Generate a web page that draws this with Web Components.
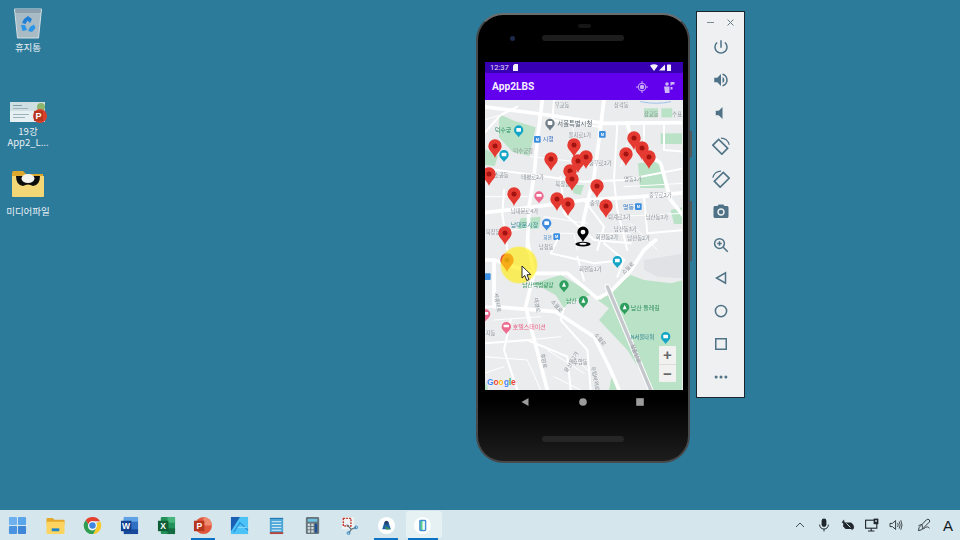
<!DOCTYPE html>
<html lang="ko">
<head>
<meta charset="utf-8">
<title>App2LBS</title>
<style>
  html, body { margin: 0; height: 100%; overflow: hidden; }
  body { font-family: "Noto Sans CJK KR", "Noto Sans", sans-serif; }
</style>
</head>
<body>
<desk-top>
  <desktop-icon style="left:0;top:6px" label="휴지통">
    <svg width="32" height="34" viewBox="0 0 32 34">
      <path d="M2.500 3 L29.500 3 L26.500 32 L5.500 32 Z" fill="#a9bcc6" stroke="#d5dee3" stroke-width="1"/>
      <path d="M3 3 L29 3 L28.400 7 L3.600 7 Z" fill="#8ba2ae"/>
      <path d="M12 13 L16 10 L20 13 L18 17 L15.500 14.500 L13.500 18 L10 17 Z" fill="#1f7fd6"/>
      <path d="M9 19 L13 19 L15 24 L10.500 25 Z M16 25 L18 21 L22 18.500 L23.500 22 L20 26 Z" fill="#2b95e8"/>
    </svg>
  </desktop-icon>
  <desktop-icon style="left:0;top:100px" label="19강&#10;App2_L...">
    <svg width="38" height="24" viewBox="0 0 38 24">
      <rect x="1" y="2" width="35" height="20" fill="#e6eff1"/>
      <rect x="1" y="2" width="35" height="9" fill="#cfdfe2"/>
      <rect x="4" y="5" width="9" height="1" fill="#7f9fa8"/>
      <rect x="4" y="8" width="15" height="1" fill="#9ab3ba"/>
      <rect x="4" y="14" width="16" height="1" fill="#9ab3ba"/>
      <rect x="4" y="17" width="12" height="1" fill="#9ab3ba"/>
      <circle cx="32" cy="7" r="4" fill="#8fb66e"/>
      <circle cx="31" cy="16" r="7" fill="#d9412b"/>
      <rect x="25" y="11" width="9" height="10" fill="#b7361f"/>
      <text x="26.500" y="19" font-family="Liberation Sans" font-size="9" font-weight="700" fill="#fff">P</text>
    </svg>
  </desktop-icon>
  <desktop-icon style="left:0;top:170px;--label-gap:8px" label="미디어파일">
    <svg width="34" height="28" viewBox="0 0 34 28">
      <path d="M1 3 Q1 1 3 1 L12 1 L15 4 L32 4 L32 9 L1 9 Z" fill="#dca92e"/>
      <path d="M1 6 L33 6 L33 26 Q33 27 32 27 L2 27 Q1 27 1 26 Z" fill="#f3d675"/>
      <path d="M5 6 L29 6 Q29 15 22 16 Q17 13 12 16 Q5 15 5 6 Z" fill="#0d0d0d"/>
      <ellipse cx="17" cy="8.500" rx="6.500" ry="4.500" fill="#f5f3ee"/>
    </svg>
  </desktop-icon>

  <phone-frame style="left:476px;top:13px">
    <status-bar></status-bar>
    <app-bar title="App2LBS"></app-bar>
    <map-view></map-view>
  </phone-frame>

  <emu-toolbar style="left:696px;top:11px">
    <tool-button><svg viewBox="0 0 24 24"><path d="M13 3h-2v10h2V3zm4.830 2.170l-1.420 1.420C17.990 7.860 19 9.810 19 12c0 3.870-3.130 7-7 7s-7-3.130-7-7c0-2.190 1.010-4.140 2.580-5.420L6.170 5.170C4.230 6.820 3 9.260 3 12c0 4.970 4.030 9 9 9s9-4.030 9-9c0-2.740-1.230-5.180-3.170-6.830z"/></svg></tool-button>
    <tool-button><svg viewBox="0 0 24 24"><path d="M3 9v6h4l5 5V4L7 9H3zm13.500 3c0-1.770-1.020-3.290-2.500-4.030v8.050c1.480-.73 2.500-2.250 2.500-4.020zM14 3.230v2.060c2.890.86 5 3.540 5 6.710s-2.110 5.850-5 6.710v2.060c4.010-.91 7-4.490 7-8.770s-2.990-7.860-7-8.770z"/></svg></tool-button>
    <tool-button><svg viewBox="0 0 24 24"><path d="M5 9v6h4l5 5V4L9 9H5z"/></svg></tool-button>
    <tool-button><svg viewBox="0 0 24 24"><g transform="rotate(45 11 13)"><rect x="2.500" y="7.500" width="17" height="11" fill="none" stroke="#4f7286" stroke-width="2.200"/></g><path d="M12 1.500 Q20.500 1.500 23 10.500" fill="none" stroke="#4f7286" stroke-width="1.400"/></svg></tool-button>
    <tool-button><svg viewBox="0 0 24 24"><g transform="rotate(-45 13 13)"><rect x="4.500" y="7.500" width="17" height="11" fill="none" stroke="#4f7286" stroke-width="2.200"/></g><path d="M12 1.500 Q3.500 1.500 1 10.500" fill="none" stroke="#4f7286" stroke-width="1.400"/></svg></tool-button>
    <tool-button><svg viewBox="0 0 24 24"><path fill-rule="evenodd" d="M9 2L7.170 4H4c-1.100 0-2 .9-2 2v12c0 1.100.9 2 2 2h16c1.100 0 2-.9 2-2V6c0-1.100-.9-2-2-2h-3.170L15 2H9zm3 15c-2.760 0-5-2.240-5-5s2.240-5 5-5 5 2.240 5 5-2.240 5-5 5z"/><circle cx="12" cy="12" r="3"/></svg></tool-button>
    <tool-button><svg viewBox="0 0 24 24"><circle cx="10" cy="10" r="6.500" fill="none" stroke="#4f7286" stroke-width="2"/><path d="M15 15l6 6M10 7v6M7 10h6" fill="none" stroke="#4f7286" stroke-width="2"/></svg></tool-button>
    <tool-button><svg viewBox="0 0 24 24"><path d="M18 5V19L6 12Z" fill="none" stroke="#4f7286" stroke-width="2"/></svg></tool-button>
    <tool-button><svg viewBox="0 0 24 24"><circle cx="12" cy="12" r="7.500" fill="none" stroke="#4f7286" stroke-width="2"/></svg></tool-button>
    <tool-button><svg viewBox="0 0 24 24"><rect x="5" y="5" width="14" height="14" fill="none" stroke="#4f7286" stroke-width="2"/></svg></tool-button>
    <tool-button><svg viewBox="0 0 24 24"><circle cx="5.500" cy="12" r="2"/><circle cx="12" cy="12" r="2"/><circle cx="18.500" cy="12" r="2"/></svg></tool-button>
  </emu-toolbar>

  <task-bar slot="bar">
    <task-icon slot="apps"><svg viewBox="0 0 20 20"><g fill="#4b93e0"><rect x="1" y="1" width="8.500" height="8.500" rx="1" fill="#6fb1ee"/><rect x="10.500" y="1" width="8.500" height="8.500" rx="1" fill="#5ba5ea"/><rect x="1" y="10.500" width="8.500" height="8.500" rx="1"/><rect x="10.500" y="10.500" width="8.500" height="8.500" rx="1" fill="#3f86d8"/></g></svg></task-icon>
    <task-icon slot="apps"><svg viewBox="0 0 20 20"><path d="M0.500 3 Q0.500 2 1.500 2 L7 2 L9 4 L19.500 4 L19.500 9 L0.500 9 Z" fill="#e3a92a"/><path d="M0.500 6 L19.500 6 L19.500 18 Q19.500 19 18.500 19 L1.500 19 Q0.500 19 0.500 18 Z" fill="#fbd55f"/><rect x="6" y="13" width="8" height="3" fill="#1f86c9"/></svg></task-icon>
    <task-icon slot="apps"><svg viewBox="0 0 20 20"><path d="M10 1 A9 9 0 0 1 18 5.500 L10 5.500 A4.500 4.500 0 0 0 5.700 8.600 L2.800 4.500 A9 9 0 0 1 10 1Z" fill="#e5412f"/><path d="M18 5.500 A9 9 0 0 1 10.800 19 L13.700 12.800 A4.500 4.500 0 0 0 14 7.500 Z" fill="#f8c92a"/><path d="M2.800 4.500 A9 9 0 0 0 10.800 19 L13.700 12.800 A4.500 4.500 0 0 1 5.700 8.600Z" fill="#2f9e50"/><circle cx="10" cy="10" r="4.400" fill="#fff"/><circle cx="10" cy="10" r="3.400" fill="#3f86e0"/></svg></task-icon>
    <task-icon slot="apps"><svg viewBox="0 0 20 20"><rect x="4" y="1" width="15" height="18" rx="1" fill="#2f6fc4"/><rect x="4" y="1" width="15" height="5" fill="#5fa3e6"/><rect x="4" y="14" width="15" height="5" fill="#174a9c"/><rect x="1" y="5" width="11" height="11" fill="#123f8e"/><text x="2.200" y="13.800" font-family="Liberation Sans" font-weight="700" font-size="9" fill="#fff">W</text></svg></task-icon>
    <task-icon slot="apps"><svg viewBox="0 0 20 20"><rect x="4" y="1" width="15" height="18" rx="1" fill="#22925a"/><rect x="11" y="1" width="8" height="6" fill="#47b67d"/><rect x="11" y="13" width="8" height="6" fill="#146b40"/><rect x="1" y="5" width="11" height="11" fill="#0f5f36"/><text x="3.500" y="13.800" font-family="Liberation Sans" font-weight="700" font-size="9" fill="#fff">X</text></svg></task-icon>
    <task-icon slot="apps" running><svg viewBox="0 0 20 20"><circle cx="11" cy="10" r="9" fill="#e0593e"/><path d="M11 1 A9 9 0 0 1 20 10 L11 10Z" fill="#ef8a6e"/><rect x="1" y="5" width="11" height="11" fill="#b7361f"/><text x="3.700" y="13.800" font-family="Liberation Sans" font-weight="700" font-size="9" fill="#fff">P</text></svg></task-icon>
    <task-icon slot="apps"><svg viewBox="0 0 20 20"><rect x="1" y="1" width="18" height="18" fill="#4cc3f7"/><path d="M1 1H10.500L1 16Z" fill="#1a5fb4"/><path d="M4 17 L10.500 7 L19 15" fill="none" stroke="#2a8fd8" stroke-width="1.300"/><path d="M8 12 H18" stroke="#8fdcfb" stroke-width="1"/></svg></task-icon>
    <task-icon slot="apps"><svg viewBox="0 0 20 20"><rect x="3" y="2" width="14" height="16" fill="#4ca6d8"/><path d="M3 2h14v1H3z" fill="#1f6fa8"/><path d="M5 6h10M5 9h10M5 12h10M5 15h10" stroke="#e4f2f9" stroke-width="1"/><rect x="3" y="17" width="14" height="2" fill="#b5473a"/></svg></task-icon>
    <task-icon slot="apps"><svg viewBox="0 0 20 20"><rect x="3" y="1" width="14" height="18" rx="1.500" fill="#67757c"/><rect x="5" y="3" width="10" height="3" fill="#6cc3e4"/><g fill="#d2d9dc"><rect x="5" y="8" width="2.500" height="2.500"/><rect x="8.700" y="8" width="2.500" height="2.500"/><rect x="5" y="11.500" width="2.500" height="2.500"/><rect x="8.700" y="11.500" width="2.500" height="2.500"/><rect x="5" y="15" width="2.500" height="2.500"/><rect x="8.700" y="15" width="2.500" height="2.500"/></g><rect x="12.400" y="8" width="2.600" height="9.500" fill="#1d4f92"/></svg></task-icon>
    <task-icon slot="apps"><svg viewBox="0 0 20 20"><rect x="2" y="1" width="13" height="13" rx="1" fill="#eef2f3"/><rect x="3.500" y="2.500" width="8" height="8" fill="none" stroke="#c33c34" stroke-width="1.500" stroke-dasharray="2 1"/><path d="M7 9 L12 14 L9 18 M12 14 L17 12" fill="none" stroke="#5b6f78" stroke-width="1.200"/><circle cx="9" cy="18" r="1.500" fill="none" stroke="#2f87c8"/><circle cx="17" cy="12" r="1.500" fill="none" stroke="#2f87c8"/></svg></task-icon>
    <task-icon slot="apps" running><svg viewBox="0 0 20 20"><circle cx="10" cy="10" r="9" fill="#fff"/><path d="M5.500 14 L8 6 L12 6 L14.500 14 Z" fill="#1d5fa8"/><path d="M8 10 L14.500 14 L10 14.500 Z" fill="#3a8f5a"/><circle cx="10" cy="7" r="2" fill="#2a3f66"/></svg></task-icon>
    <task-icon slot="apps" running active><svg viewBox="0 0 20 20"><circle cx="10" cy="10" r="9" fill="#fff"/><rect x="6.500" y="4" width="7.500" height="12" rx="1.500" fill="#3f8fd8"/><rect x="8" y="5.500" width="4.500" height="9" fill="#5fd08a"/><rect x="10" y="5.500" width="2.500" height="9" fill="#f0fafc"/></svg></task-icon>

    <tray-icon slot="tray"><svg viewBox="0 0 20 20"><path d="M5 12.500 L10 7.500 L15 12.500" fill="none" stroke="#3b4a52" stroke-width="1.200"/></svg></tray-icon>
    <tray-icon slot="tray"><svg viewBox="0 0 20 20"><rect x="7" y="2" width="6" height="10.500" rx="3" fill="#20282d"/><path d="M4.500 9.500 Q5 15 10 15 Q15 15 15.500 9.500 M10 15 V18" fill="none" stroke="#20282d" stroke-width="1.200"/></svg></tray-icon>
    <tray-icon slot="tray"><svg viewBox="0 0 20 20"><path d="M2 7 L5 3 L6 8 Z M15 17 L18 12 L13 12 Z" fill="#20282d"/><path d="M4 7 H14 L17 10 V15 H7 L4 12 Z" fill="#20282d"/><path d="M8 8 L13 13" stroke="#d5e6ec" stroke-width="1.200"/></svg></tray-icon>
    <tray-icon slot="tray"><svg viewBox="0 0 20 20"><rect x="2" y="4" width="14" height="10" fill="none" stroke="#20282d" stroke-width="1.400"/><path d="M9 14v3M5 17.500h8" stroke="#20282d" stroke-width="1.400"/><rect x="12" y="2" width="6" height="7" fill="#20282d"/><rect x="14" y="4" width="2" height="2" fill="#d5e6ec"/></svg></tray-icon>
    <tray-icon slot="tray"><svg viewBox="0 0 20 20"><path d="M2.500 8 H5.500 L9.500 4.500 V15.500 L5.500 12 H2.500 Z" fill="none" stroke="#20282d" stroke-width="1.100"/><path d="M12 7.500 Q13.500 10 12 12.500 M14 5.500 Q16.500 10 14 14.500 M16 4 Q19 10 16 16" fill="none" stroke="#20282d" stroke-width="1"/></svg></tray-icon>
    <tray-icon slot="tray" style="margin-left:4px"><svg viewBox="0 0 20 20"><path d="M3 17 L4 13 L13 3.500 Q15 2 16.500 3.500 Q18 5 16.500 6.500 L7 16 Z" fill="none" stroke="#20282d" stroke-width="1.100"/><path d="M3 11 Q9 7 8 13 Q7 17 12 13 Q15 11 17 14" fill="none" stroke="#20282d" stroke-width="1"/></svg></tray-icon>
    <tray-icon slot="tray"><span>A</span></tray-icon>
  </task-bar>
</desk-top>

<script>
/* === ESCRITORIO === */

class DeskTop extends HTMLElement {
  constructor() {
    super();
    this.attachShadow({ mode: "open" });
    this.shadowRoot.innerHTML = `
      <style>
        :host {
          display: flex;
          flex-direction: column;
          width: 960px;
          height: 540px;
          background: #2d7b9b;
        }
        .canvas {
          position: relative;
          flex: 1;
        }
      </style>
      <div class="canvas"><slot></slot></div>
      <slot name="bar"></slot>
    `;
  }
}
customElements.define("desk-top", DeskTop);

class DesktopIcon extends HTMLElement {
  constructor() {
    super();
    this.attachShadow({ mode: "open" });
    const label = this.getAttribute("label") || "";
    this.shadowRoot.innerHTML = `
      <style>
        :host {
          position: absolute;
          display: flex;
          flex-direction: column;
          align-items: center;
          width: 56px;
          color: #e8f0f3;
          font: 9.5px/11px "Noto Sans CJK KR", "Noto Sans", sans-serif;
          text-align: center;
        }
        .label { white-space: pre-line; margin-top: var(--label-gap, 2px); }
        ::slotted(svg) { display: block; }
      </style>
      <slot></slot>
      <div class="label">${label}</div>
    `;
  }
}
customElements.define("desktop-icon", DesktopIcon);

/* === TELEFONO === */

class PhoneFrame extends HTMLElement {
  constructor() {
    super();
    this.attachShadow({ mode: "open" });
    this.shadowRoot.innerHTML = `
      <style>
        :host {
          position: absolute;
          display: block;
          box-sizing: border-box;
          width: 214px;
          height: 450px;
          background: linear-gradient(#000 86%, #1d1d1d);
          border: 2px solid #47494b;
          border-top-color: #6a6c6e;
          border-radius: 27px;
        }
        .top {
          position: relative;
          height: 47px;
        }
        .sensor {
          position: absolute;
          left: 100px; top: 9px;
          width: 13px; height: 4px;
          border-radius: 2px;
          background: #161616;
        }
        .camera {
          position: absolute;
          left: 32px; top: 21px;
          width: 5px; height: 5px;
          border-radius: 50%;
          background: #1d2a4a;
        }
        .speaker {
          position: absolute;
          left: 64px; top: 20px;
          width: 82px; height: 6px;
          border-radius: 3px;
          background: #1d1d1d;
        }
        .key {
          position: absolute;
          right: -4px;
          width: 2px;
          background: #55585a;
        }
        .power { top: 116px; height: 26px; }
        .volume { top: 186px; height: 60px; }
        .screen {
          display: flex;
          flex-direction: column;
          margin: 0 5.5px 0 7px;
          height: 328px;
        }
        .nav {
          display: flex;
          justify-content: space-between;
          align-items: center;
          height: 24px;
          padding: 0 43px 0 42px;
        }
        .nav svg { width: 10px; height: 10px; fill: #9c9c9c; }
        .bottom-speaker {
          width: 82px;
          height: 6px;
          margin: 22px auto 0;
          border-radius: 3px;
          background: #262626;
        }
      </style>
      <div class="key power"></div>
      <div class="key volume"></div>
      <div class="top">
        <div class="sensor"></div>
        <div class="camera"></div>
        <div class="speaker"></div>
      </div>
      <div class="screen"><slot></slot></div>
      <div class="nav">
        <svg viewBox="0 0 10 10"><path d="M8.500 1V9L1.500 5Z"/></svg>
        <svg viewBox="0 0 10 10"><circle cx="5" cy="5" r="3.800"/></svg>
        <svg viewBox="0 0 10 10"><rect x="1.200" y="1.200" width="7.600" height="7.600"/></svg>
      </div>
      <div class="bottom-speaker"></div>
    `;
  }
}
customElements.define("phone-frame", PhoneFrame);

class StatusBar extends HTMLElement {
  constructor() {
    super();
    this.attachShadow({ mode: "open" });
    this.shadowRoot.innerHTML = `
      <style>
        :host {
          display: flex;
          align-items: center;
          flex: none;
          height: 11px;
          padding: 0 12px 0 5px;
          background: #3700b3;
          color: #e9e3f7;
          font: 7.5px Roboto, sans-serif;
        }
        svg { display: block; fill: #f2eefb; }
        .sd { margin-left: 4px; }
        .right { display: flex; align-items: center; gap: 1.5px; margin-left: auto; }
      </style>
      <span>12:37</span>
      <svg class="sd" width="5" height="7" viewBox="0 0 5 7"><path d="M1.500 0H5V7H0V1.500Z"/></svg>
      <div class="right">
        <svg width="8" height="7" viewBox="0 0 8 7"><path d="M0 1.500Q4 -1 8 1.500L4 7Z"/></svg>
        <svg width="6" height="7" viewBox="0 0 6 7"><path d="M6 0.500V6.500H0Z"/></svg>
        <svg width="4" height="7" viewBox="0 0 4 7"><rect y="0.500" width="4" height="6.500" rx=".5"/></svg>
      </div>
    `;
  }
}
customElements.define("status-bar", StatusBar);

class AppBar extends HTMLElement {
  constructor() {
    super();
    this.attachShadow({ mode: "open" });
    const title = this.getAttribute("title") || "";
    this.shadowRoot.innerHTML = `
      <style>
        :host {
          display: flex;
          align-items: center;
          flex: none;
          height: 27px;
          padding: 0 8px 0 7px;
          background: #6200ee;
          color: #f4eefe;
          font: 700 10.2px Roboto, sans-serif;
        }
        .actions { display: flex; align-items: center; gap: 15px; margin-left: auto; }
        svg { display: block; }
      </style>
      <span>${title}</span>
      <div class="actions">
        <svg width="12" height="12" viewBox="0 0 12 12">
          <circle cx="6" cy="6" r="3.800" fill="none" stroke="#c9aef6" stroke-width="1"/>
          <circle cx="6" cy="6" r="2.200" fill="#c9aef6"/>
          <path d="M6 0v2M6 10v2M0 6h2M10 6h2" stroke="#c9aef6" stroke-width="1"/>
        </svg>
        <svg width="12" height="12" viewBox="0 0 12 12" fill="#cdb6f5">
          <circle cx="4" cy="3" r="1.800"/>
          <path d="M1 5.500H6.500V12H2Z"/>
          <path d="M7.500 1H11.500V3.500H9.500L7.500 5Z"/>
          <path d="M7.500 6H9.500V8.500H7.500Z"/>
        </svg>
      </div>
    `;
  }
}
customElements.define("app-bar", AppBar);

/* === MAPA === */

class MapPin extends HTMLElement {
  constructor() {
    super();
    this.attachShadow({ mode: "open" });
    this.shadowRoot.innerHTML = `
      <style>
        :host { position: absolute; display: block; width: 14px; height: 19px; }
        svg { display: block; }
      </style>
      <svg width="14" height="19" viewBox="0 0 14 19">
        <path d="M7 19 C5.800 14.500 0.300 11.500 0.300 6.900 A6.700 6.700 0 0 1 13.700 6.900 C13.700 11.500 8.200 14.500 7 19Z" fill="#e53a32"/>
        <circle cx="7" cy="7" r="2.500" fill="#a3130f"/>
      </svg>
    `;
  }
}
customElements.define("map-pin", MapPin);

// centros de los pines, en coordenadas de la pantalla completa
const PINS = [
  [495, 146], [489, 174], [514, 194], [551, 159], [574, 145], [586, 157],
  [578, 161], [570, 171], [572, 179], [597, 186], [557, 199], [568, 204],
  [606, 206], [626, 154], [634, 138], [642, 148], [649, 157], [505, 233],
  [507, 260]
];

class MapView extends HTMLElement {
  constructor() {
    super();
    this.attachShadow({ mode: "open" });
    const pins = PINS.map(p =>
      `<map-pin style="left:${p[0] - 485 - 7}px;top:${p[1] - 100 - 7}px"></map-pin>`).join("");
    this.shadowRoot.innerHTML = `
      <style>
        :host {
          position: relative;
          display: block;
          flex: 1;
          overflow: hidden;
          background: #ebecee;
          font-family: "Noto Sans CJK KR", "Noto Sans", sans-serif;
        }
        svg.base { position: absolute; left: 0; top: 0; filter: blur(.45px); }
        .heat {
          position: absolute;
          left: 16px; top: 147px;
          width: 36px; height: 36px;
          border-radius: 50%;
          background: rgba(255, 236, 10, .64);
          box-shadow: 0 0 2px rgba(255, 236, 10, .6);
        }
        .target { position: absolute; left: 90px; top: 126px; }
        .cursor { position: absolute; left: 36px; top: 165px; }
        .zoom {
          position: absolute;
          left: 174px; top: 246px;
          width: 17px; height: 36px;
          display: flex;
          flex-direction: column;
          background: #f1f2f0;
          border-radius: 1px;
          color: #666;
          font: 700 15px/18px "Liberation Sans", sans-serif;
          text-align: center;
        }
        .zoom span { flex: 1; }
        .zoom span + span { border-top: 1px solid #dcdcdc; }
        .google {
          position: absolute;
          left: 2px; top: 277px;
          font: 700 8.5px "Liberation Sans", sans-serif;
          letter-spacing: -.1px;
          text-shadow: 0 0 1px #fff, 0 0 1px #fff;
        }
      </style>
      <svg class="base" width="197" height="290" viewBox="485 100 197 290" xmlns="http://www.w3.org/2000/svg">
        <!-- mitad de arriba, coordenadas del zoom 3x -->
        <g transform="translate(484 100) scale(.33333)" fill="none" stroke-linejoin="round" stroke-linecap="round">
          <g fill="#b9e2c6">
            <path d="M45 42 L90 62 L155 82 L136 168 L85 155 L45 112Z"/>
            <path d="M0 145 L42 168 L32 198 L0 195Z"/>
            <path d="M480 25 L522 25 L522 52 L480 52Z"/>
            <path d="M532 25 L565 25 L565 52 L532 52Z"/>
            <path d="M530 100 L600 100 L600 132 L530 132Z"/>
            <path d="M462 190 L535 185 L542 264 L468 264Z"/>
            <path d="M265 255 L300 255 L290 285 L268 280Z"/>
            <path d="M110 355 L170 350 L165 385 L100 390Z"/>
            <path d="M560 330 L600 320 L600 372 L570 372Z"/>
          </g>
          <g stroke="#fff" stroke-width="11">
            <path d="M175 0 L160 120 L150 230 L135 320 L130 450"/>
            <path d="M360 0 L345 120 L330 230 L312 300 L290 400"/>
            <path d="M0 20 L170 42 L360 70 L600 68"/>
            <path d="M0 338 L140 322 L300 300 L470 290 L600 278"/>
            <path d="M430 70 L445 130 L530 190 L560 300 L600 350"/>
          </g>
          <g stroke="#fff" stroke-width="6">
            <path d="M0 100 L50 45 L100 20"/>
            <path d="M0 205 L150 225 L300 245 L420 240 L600 205"/>
            <path d="M210 0 L205 60 L345 80"/>
            <path d="M400 70 L390 240 L400 330 L430 450"/>
            <path d="M480 70 L480 130 M540 70 L540 150 L600 155"/>
            <path d="M60 270 L55 340 L70 450"/>
            <path d="M230 230 L240 340 L330 420 L440 430"/>
            <path d="M480 290 L490 400 L600 390"/>
            <path d="M300 300 L360 380 L340 450"/>
          </g>
          <g stroke="#fff" stroke-width="3">
            <path d="M0 60 L50 45 M0 290 L130 290 M140 170 L320 190 M20 400 L130 385"/>
            <path d="M270 60 L265 130 M430 130 L410 200 M420 260 L600 250"/>
            <path d="M390 350 L600 340 M180 350 L310 370 M440 370 L520 450"/>
            <path d="M200 400 L270 400 L280 450 M340 400 L440 400"/>
          </g>
          <path d="M470 5 Q520 15 560 5" stroke="#9cc3e8" stroke-width="3"/>
          <g fill="#8b9399" stroke="none" font-size="16">
            <text x="212" y="20">무교동</text>
            <text x="390" y="20">삼각동</text>
            <text x="480" y="48">장교동</text>
            <text x="565" y="48">수표</text>
            <text x="220" y="78" font-size="19" fill="#5f6b72">서울특별시청</text>
            <text x="254" y="112">을지로1가</text>
            <text x="88" y="158">덕수궁길</text>
            <text x="315" y="196">충무로2가</text>
            <text x="30" y="232">소공동</text>
            <text x="112" y="238">태평로2가</text>
            <text x="214" y="258">북창동</text>
            <text x="420" y="242">명동2가</text>
            <text x="495" y="292">충무로2가</text>
            <text x="80" y="338">남대문로4가</text>
            <text x="318" y="315">충무</text>
            <text x="372" y="358">퇴계로3가</text>
            <text x="390" y="392">남산동3가</text>
            <text x="485" y="358">남산동3가</text>
            <text x="335" y="416">회현동2가</text>
            <text x="430" y="420">남산동2가</text>
            <text x="5" y="402">북창동</text>
          </g>
          <text x="32" y="95" fill="#2c8e6a" stroke="none" font-size="18">덕수궁</text>
          <text x="176" y="124" fill="#3a6fc0" stroke="none" font-size="18">시청</text>
          <text x="417" y="326" fill="#3a7fc8" stroke="none" font-size="18">명동</text>
          <text x="80" y="380" fill="#3a8a9a" stroke="none" font-size="18">남대문시장</text>
          <text x="178" y="417" fill="#3a7fc8" stroke="none" font-size="14">회현</text>
          <!-- POIs -->
          <g stroke="none">
            <path d="M104 112 C100 104 90 100 90 90 A14 14 0 0 1 118 90 C118 100 108 104 104 112Z" fill="#12a5c6"/>
            <rect x="97" y="84" width="14" height="11" rx="2" fill="#fff"/>
            <path d="M60 186 C56 178 46 174 46 164 A14 14 0 0 1 74 164 C74 174 64 178 60 186Z" fill="#12a5c6"/>
            <rect x="53" y="158" width="14" height="11" rx="2" fill="#fff"/>
            <path d="M198 92 C194 84 184 80 184 70 A14 14 0 0 1 212 70 C212 80 202 84 198 92Z" fill="#6d7c86"/>
            <rect x="191" y="63" width="14" height="12" rx="2" fill="#fff"/>
            <path d="M165 310 C161 302 151 298 151 288 A14 14 0 0 1 179 288 C179 298 169 302 165 310Z" fill="#ee6a8e"/>
            <rect x="157" y="282" width="16" height="8" rx="2" fill="#fff"/>
            <path d="M188 392 C184 384 174 380 174 370 A14 14 0 0 1 202 370 C202 380 192 384 188 392Z" fill="#3f8cde"/>
            <rect x="181" y="364" width="14" height="11" rx="2" fill="#fff"/>
          </g>
          <g stroke="none" font-family="Liberation Sans" font-size="12" font-weight="700" text-anchor="middle">
            <rect x="150" y="108" width="20" height="20" rx="3" fill="#3c8fe0"/><text x="160" y="123" fill="#fff">M</text>
            <rect x="345" y="93" width="20" height="20" rx="3" fill="#3c8fe0"/><text x="355" y="108" fill="#fff">M</text>
            <rect x="453" y="310" width="20" height="20" rx="3" fill="#3c8fe0"/><text x="463" y="325" fill="#fff">M</text>
            <rect x="208" y="400" width="20" height="20" rx="3" fill="#3c8fe0"/><text x="218" y="415" fill="#fff">M</text>
          </g>
        </g>
        <!-- mitad de abajo -->
        <g transform="translate(484 240) scale(.33333)" fill="none" stroke-linejoin="round" stroke-linecap="round">
          <path d="M480 60 L600 40 L600 115 L520 110 L480 90Z" fill="#e0e2e5"/>
          <path d="M150 130 L230 105 L290 140 L350 180 L385 150 L440 105 L480 120 L560 130 L600 120 L600 450 L505 450 L430 330 L345 240 L375 205 L320 165 L255 185 L240 205 L215 165Z" fill="#b9e2c6"/>
          <path d="M375 450 L400 450 L385 400Z M0 450 L12 450 L8 420Z" fill="#b9e2c6"/>
          <g stroke="#fff" stroke-width="11">
            <path d="M130 0 L150 100 L250 100 L340 175 L380 155 L440 92 L480 30 L515 0"/>
            <path d="M30 60 L30 200 L215 215 L330 290 L380 390 L405 450"/>
            <path d="M150 100 L125 200 L190 450"/>
            <path d="M0 60 L30 60 L150 100"/>
          </g>
          <path d="M370 140 L500 450" stroke="#fff" stroke-width="16"/>
          <path d="M370 140 L500 450" stroke="#c4c8cc" stroke-width="10"/>
          <g stroke="#fff" stroke-width="6">
            <path d="M240 205 L230 240 L310 330 L320 450"/>
            <path d="M0 200 L30 200 M0 310 L130 300 L250 350 L260 450"/>
            <path d="M220 0 L200 40 L330 70 L420 60"/>
            <path d="M280 50 L300 120 M80 240 L60 330 L100 450"/>
            <path d="M360 10 L420 60 L400 110"/>
          </g>
          <g stroke="#fff" stroke-width="3">
            <path d="M0 350 L130 360 L170 450 M30 240 L170 230 M130 300 L230 290 M190 330 L300 400"/>
            <path d="M210 410 L290 450 M270 350 L320 400 M0 400 L60 380"/>
          </g>
          <g fill="#8b9399" stroke="none" font-size="16">
            <text x="165" y="28">남창동</text>
            <text x="285" y="94">회현동1가</text>
            <text x="420" y="104" transform="rotate(-45 420 104)">소월로</text>
            <text x="200" y="185" transform="rotate(50 200 185)">소월로</text>
            <text x="330" y="285" transform="rotate(50 330 285)">소월로</text>
            <text x="150" y="175" transform="rotate(80 150 175)">대경로</text>
            <text x="30" y="160" transform="rotate(80 30 160)">세종대로</text>
            <text x="440" y="315" transform="rotate(70 440 315)">장충단로</text>
            <text x="170" y="342" transform="rotate(80 170 342)">후암로</text>
            <text x="322" y="380" transform="rotate(80 322 380)">두텁바위로</text>
            <text x="267" y="372">후암동</text>
            <text x="250" y="398" transform="rotate(-60 250 398)">용산동2가</text>
            <text x="5" y="285">자동</text>
          </g>
          <text x="115" y="142" fill="#2f8f5a" stroke="none" font-size="17">남산백범광장</text>
          <text x="247" y="190" fill="#2f8f5a" stroke="none" font-size="17">남산</text>
          <text x="440" y="210" fill="#2f8f5a" stroke="none" font-size="18">남산 둘레길</text>
          <text x="86" y="267" fill="#e8688a" stroke="none" font-size="18">호텔스테이션</text>
          <text x="440" y="297" fill="#2a7f8f" stroke="none" font-size="16">N서울타워</text>
          <g stroke="none">
            <path d="M400 84 C396 76 386 72 386 62 A14 14 0 0 1 414 62 C414 72 404 76 400 84Z" fill="#12a5c6"/>
            <rect x="393" y="56" width="14" height="11" rx="2" fill="#fff"/>
            <path d="M545 312 C541 304 531 300 531 290 A14 14 0 0 1 559 290 C559 300 549 304 545 312Z" fill="#12a5c6"/>
            <rect x="538" y="284" width="14" height="11" rx="2" fill="#fff"/>
            <path d="M240 157 C236 149 226 145 226 135 A14 14 0 0 1 254 135 C254 145 244 149 240 157Z" fill="#2f9e5f"/>
            <path d="M298 204 C294 196 284 192 284 182 A14 14 0 0 1 312 182 C312 192 302 196 298 204Z" fill="#2f9e5f"/>
            <path d="M422 224 C418 216 408 212 408 202 A14 14 0 0 1 436 202 C436 212 426 216 422 224Z" fill="#2f9e5f"/>
            <path d="M240 126 L246 140 L234 140Z M298 174 L304 188 L292 188Z M422 194 L428 208 L416 208Z" fill="#fff"/>
            <path d="M67 282 C63 274 53 270 53 260 A14 14 0 0 1 81 260 C81 270 71 274 67 282Z" fill="#ee6a8e"/>
            <rect x="59" y="254" width="16" height="8" rx="2" fill="#fff"/>
            <path d="M5 244 C1 236 -9 232 -9 222 A14 14 0 0 1 19 222 C19 232 9 236 5 244Z" fill="#ee6a8e"/>
            <rect x="-3" y="216" width="16" height="8" rx="2" fill="#fff"/>
            <rect x="0" y="100" width="20" height="20" rx="3" fill="#3c8fe0"/>
          </g>
        </g>
      </svg>
      ${pins}
      <svg class="target" width="16" height="21" viewBox="0 0 20 26">
        <path d="M10 20 C8 15 3 12 3 7.500 A7 7 0 0 1 17 7.500 C17 12 12 15 10 20Z M10 4.500 A3 3 0 1 0 10 10.500 A3 3 0 1 0 10 4.500Z" fill="#000" fill-rule="evenodd"/>
        <ellipse cx="10" cy="22.500" rx="9.500" ry="3" fill="#000"/>
        <ellipse cx="10" cy="22" rx="4.500" ry="1.200" fill="#fff"/>
      </svg>
      <div class="heat"></div>
      <svg class="cursor" width="11" height="17" viewBox="0 0 11 17">
        <path d="M1 1 V13 L3.800 10.500 L5.800 15.500 L8 14.500 L6 9.800 L9.800 9.500Z" fill="#fff" stroke="#111" stroke-width=".9"/>
      </svg>
      <div class="zoom"><span>+</span><span>−</span></div>
      <div class="google"><span style="color:#4285f4">G</span><span style="color:#ea4335">o</span><span style="color:#fbbc05">o</span><span style="color:#4285f4">g</span><span style="color:#34a853">l</span><span style="color:#ea4335">e</span></div>
    `;
  }
}
customElements.define("map-view", MapView);

/* === BARRA DEL EMULADOR === */

class EmuToolbar extends HTMLElement {
  constructor() {
    super();
    this.attachShadow({ mode: "open" });
    this.shadowRoot.innerHTML = `
      <style>
        :host {
          position: absolute;
          display: flex;
          flex-direction: column;
          box-sizing: border-box;
          width: 49px;
          height: 387px;
          background: #eff0f1;
          border: 1px solid #16252e;
        }
        .head {
          display: flex;
          justify-content: space-between;
          align-items: center;
          height: 20px;
          padding: 0 10px;
        }
        .head svg { display: block; }
        .buttons { display: flex; flex-direction: column; margin-top: -2px; }
      </style>
      <div class="head">
        <svg width="7" height="7" viewBox="0 0 7 7"><path d="M0 3.500H7" stroke="#7b8a93"/></svg>
        <svg width="7" height="7" viewBox="0 0 7 7"><path d="M.5 .5L6.500 6.500M6.500 .5L.5 6.500" stroke="#6c7c86"/></svg>
      </div>
      <div class="buttons"><slot></slot></div>
    `;
  }
}
customElements.define("emu-toolbar", EmuToolbar);

class ToolButton extends HTMLElement {
  constructor() {
    super();
    this.attachShadow({ mode: "open" });
    this.shadowRoot.innerHTML = `
      <style>
        :host {
          display: flex;
          align-items: center;
          justify-content: center;
          height: 33px;
        }
        ::slotted(svg) { width: 18px; height: 18px; fill: #4f7286; display: block; }
      </style>
      <slot></slot>
    `;
  }
}
customElements.define("tool-button", ToolButton);

/* === BARRA DE TAREAS === */

class TaskBar extends HTMLElement {
  constructor() {
    super();
    this.attachShadow({ mode: "open" });
    this.shadowRoot.innerHTML = `
      <style>
        :host {
          display: flex;
          align-items: stretch;
          flex: none;
          height: 30px;
          background: #d5e6ec;
        }
        .apps { display: flex; }
        .tray { display: flex; margin-left: auto; align-items: center; }
      </style>
      <div class="apps"><slot name="apps"></slot></div>
      <div class="tray"><slot name="tray"></slot></div>
    `;
  }
}
customElements.define("task-bar", TaskBar);

class TaskIcon extends HTMLElement {
  constructor() {
    super();
    this.attachShadow({ mode: "open" });
    this.shadowRoot.innerHTML = `
      <style>
        :host {
          position: relative;
          display: flex;
          align-items: center;
          justify-content: center;
          width: 36.7px;
        }
        :host(:first-child) { width: 37.6px; padding-right: 3px; box-sizing: border-box; }
        :host([active]) .bg {
          position: absolute;
          left: 2px; right: -1px; top: 1px; bottom: 2px;
          border-radius: 3px;
          background: #e6f1f4;
        }
        :host([running]) .line {
          position: absolute;
          left: 50%; bottom: 0;
          width: 24px; height: 2px;
          margin-left: -12px;
          background: #0b72c4;
        }
        :host([active]) .line { width: 30px; margin-left: -15px; }
        ::slotted(svg) { position: relative; width: 19px; height: 19px; display: block; }
      </style>
      <div class="bg"></div>
      <slot></slot>
      <div class="line"></div>
    `;
  }
}
customElements.define("task-icon", TaskIcon);

class TrayIcon extends HTMLElement {
  constructor() {
    super();
    this.attachShadow({ mode: "open" });
    this.shadowRoot.innerHTML = `
      <style>
        :host {
          display: flex;
          align-items: center;
          justify-content: center;
          width: 24px;
          color: #141a1e;
          font: 15px "Liberation Sans", sans-serif;
        }
        ::slotted(svg) { width: 16px; height: 16px; display: block; }
      </style>
      <slot></slot>
    `;
  }
}
customElements.define("tray-icon", TrayIcon);
</script>
</body>
</html>
